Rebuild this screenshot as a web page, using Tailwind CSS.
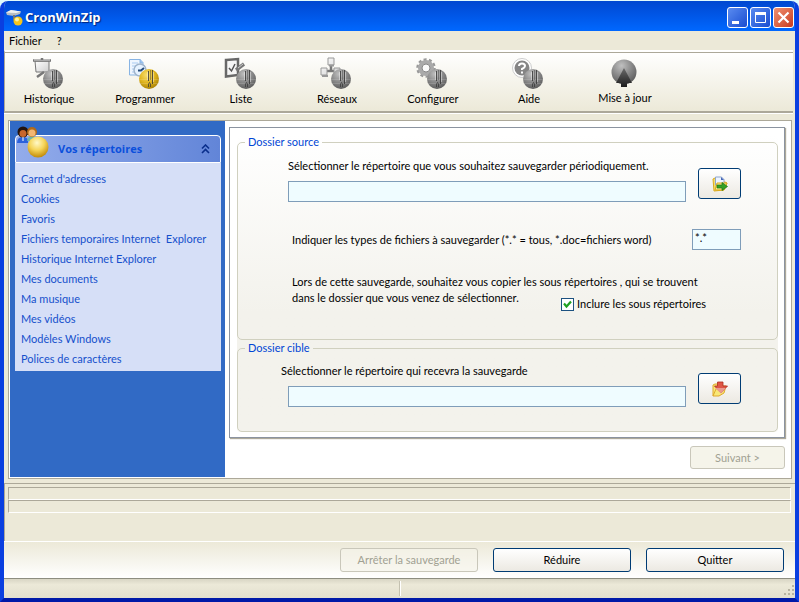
<!DOCTYPE html>
<html lang="fr">
<head>
  <meta charset="UTF-8" />
  <meta name="viewport" content="width=device-width, initial-scale=1.0" />
  <title>CronWinZip</title>
  <script src="https://cdn.jsdelivr.net/npm/@tailwindcss/browser@4"></script>
</head>
<body class="min-h-screen bg-[#e2fbfc] pt-px font-['Lato','Liberation_Sans',sans-serif] text-[11px] leading-4 text-black">
  <!-- shared gradients and the zipped ball -->
  <svg class="absolute size-0" aria-hidden="true">
    <defs>
      <radialGradient id="gray" cx="40%" cy="25%" r="80%"><stop offset="0" stop-color="#c0c0c0" /><stop offset=".5" stop-color="#8a8a8a" /><stop offset="1" stop-color="#585858" /></radialGradient>
      <radialGradient id="gold" cx="40%" cy="30%" r="80%"><stop offset="0" stop-color="#f8e070" /><stop offset=".5" stop-color="#deb31c" /><stop offset="1" stop-color="#9a7400" /></radialGradient>
      <linearGradient id="sheet" x1="0" y1="0" x2="1" y2="1"><stop offset="0" stop-color="#ffffff" /><stop offset="1" stop-color="#cfcfcf" /></linearGradient>
      <linearGradient id="arrow" x1="0" y1="0" x2="0" y2="1"><stop offset="0" stop-color="#6a6a6a" /><stop offset="1" stop-color="#1c1c1c" /></linearGradient>
      <symbol id="zip" viewBox="0 0 20 20">
        <path d="M0 10.500H20M1 14.500H19" stroke="#fff" stroke-opacity=".15" fill="none" />
        <path d="M8.500 3V11M14.500 3V13" stroke="#fff" stroke-opacity=".4" fill="none" />
        <path d="M9.500 2V12M13.500 1V15" stroke="#333" stroke-opacity=".8" fill="none" />
        <path d="M11.500 1V11" stroke="#333" stroke-opacity=".4" fill="none" />
        <path d="M9.500 18V15L10.500 13.500L11.500 15V18" stroke="#333" stroke-opacity=".7" fill="none" />
      </symbol>
    </defs>
  </svg>

  <div class="flex min-h-[calc(100vh-1px)] flex-col overflow-hidden rounded-t-lg border-x-4 border-b-4 border-[#0a3fe0] border-b-[#0019a8] bg-[#ece9d8]">
    <!-- barre de titre -->
    <header class="-mx-1 flex h-[30px] items-center bg-linear-to-b from-[#0048d0] via-[#0057e8] to-[#0068ff] pt-[2px] pr-[5px] pl-[5px]">
      <svg class="size-[18px]" viewBox="0 0 18 18" aria-hidden="true">
        <path d="M1 4.500L6 2L16 3.500L15 6L9 8L2 7Z" fill="#b9bec2" /><path d="M1 4.500L6 2L16 3.500L11 5Z" fill="#f2f2f2" />
        <path d="M9 7V11L12 12" stroke="#777" stroke-width="2" fill="none" />
        <circle cx="13" cy="13" r="4.500" fill="#f4c51c" /><circle cx="12" cy="11.500" r="2" fill="#fff3a0" />
      </svg>
      <h1 class="ml-[2px] flex-1 font-['Open_Sans',sans-serif] text-[13px] font-bold text-white [text-shadow:1px_1px_1px_#00237a]">CronWinZip</h1>
      <div class="flex gap-[2px]">
        <button class="grid size-[21px] place-items-center rounded-[3px] border border-white bg-linear-to-br from-[#5a8bf0] to-[#1a4bd0]" aria-label="Réduire la fenêtre">
          <svg class="size-[19px]" viewBox="0 0 19 19"><path d="M4 13H11V16H4Z" fill="#fff" /></svg>
        </button>
        <button class="grid size-[21px] place-items-center rounded-[3px] border border-white bg-linear-to-br from-[#5a8bf0] to-[#1a4bd0]" aria-label="Agrandir">
          <svg class="size-[19px]" viewBox="0 0 19 19"><path d="M4.500 5V14.500H14.500V5" stroke="#fff" fill="none" /><path d="M4 4H15V7H4Z" fill="#fff" /></svg>
        </button>
        <button class="grid size-[21px] place-items-center rounded-[3px] border border-white bg-linear-to-br from-[#f09070] to-[#c8381c]" aria-label="Fermer">
          <svg class="size-[19px]" viewBox="0 0 19 19"><path d="M4.500 4.500L14.500 14.500M14.500 4.500L4.500 14.500" stroke="#fff" stroke-width="2.200" /></svg>
        </button>
      </div>
    </header>

    <!-- menu -->
    <nav class="flex h-[19px] items-center gap-[15px] pl-[5px]">
      <button>Fichier</button>
      <button>?</button>
    </nav>

    <!-- barre d'outils -->
    <div class="mr-[2px] flex h-[63px] gap-2 border-y-2 border-l border-t-white border-b-[#aca899] border-l-[#aca899] bg-linear-to-b from-white to-[#ece9d8] pt-[5px] shadow-[inset_0_1px_#aca899,0_1px_#fff]">
      <button class="flex w-[88px] flex-col items-center">
        <svg class="size-[34px]" viewBox="0 0 34 34">
          <path d="M3 4H17V15H4Z" fill="url(#sheet)" stroke="#777" /><path d="M1 3.500H19" stroke="#777" stroke-width="2.500" /><path d="M2 3H18" stroke="#ddd" /><path d="M10 1V3M12 15L5 20" stroke="#777" stroke-width="2.500" />
          <circle cx="21" cy="22" r="10" fill="url(#gray)" /><use href="#zip" x="11" y="12" width="20" height="20" />
        </svg>
        <span>Historique</span>
      </button>
      <button class="flex w-[88px] flex-col items-center">
        <svg class="size-[34px]" viewBox="0 0 34 34">
          <path d="M1.500 2.500H12L15 5.500V18H1.500Z" fill="#eef5fe" stroke="#88b4e4" /><path d="M12 2V6H15" fill="#9ac2f0" stroke="#88b4e4" /><path d="M4 6H10M4 9H8M4 12H7M4 15H8" stroke="#a9cbf1" />
          <circle cx="12" cy="13" r="6" fill="#e6f2ff" stroke="#9fb4cc" stroke-width="1.500" /><path d="M10 13.500H13L16 11" stroke="#244a78" stroke-width="2" fill="none" />
          <circle cx="21" cy="22" r="10" fill="url(#gold)" /><use href="#zip" x="11" y="12" width="20" height="20" />
        </svg>
        <span>Programmer</span>
      </button>
      <button class="flex w-[88px] flex-col items-center">
        <svg class="size-[34px]" viewBox="0 0 34 34">
          <path d="M2 3L14 2V18L2 19.500Z" fill="#f5f5f5" stroke="#686868" stroke-width="2.500" /><path d="M5 11L7.500 14L11 7" stroke="#555" stroke-width="1.500" fill="none" />
          <path d="M20 7L12 13" stroke="#777" stroke-width="3.500" /><path d="M19 7L14 11" stroke="#ccc" />
          <circle cx="22" cy="22" r="10" fill="url(#gray)" /><use href="#zip" x="12" y="12" width="20" height="20" />
        </svg>
        <span>Liste</span>
      </button>
      <button class="flex w-[88px] flex-col items-center">
        <svg class="size-[34px]" viewBox="0 0 34 34">
          <path d="M11 7V14M6 14H17" stroke="#777" stroke-width="2.500" />
          <path d="M8 1H14V8H8ZM1 11H7V18H1ZM14 11H20V16H14Z" fill="url(#sheet)" stroke="#999" /><path d="M9 8.500H14M2 19H8" stroke="#999" stroke-width="2" />
          <circle cx="21" cy="22" r="10" fill="url(#gray)" /><use href="#zip" x="11" y="12" width="20" height="20" />
        </svg>
        <span>Réseaux</span>
      </button>
      <button class="flex w-[88px] flex-col items-center">
        <svg class="size-[34px]" viewBox="0 0 34 34">
          <circle cx="10" cy="11" r="8.500" fill="none" stroke="#999" stroke-width="2.500" stroke-dasharray="3 2.340" /><circle cx="10" cy="11" r="6" fill="none" stroke="#aaa" stroke-width="4" /><circle cx="10" cy="11" r="4" fill="#fafafa" stroke="#888" />
          <circle cx="21" cy="22" r="10" fill="url(#gray)" /><use href="#zip" x="11" y="12" width="20" height="20" />
        </svg>
        <span>Configurer</span>
      </button>
      <button class="flex w-[88px] flex-col items-center">
        <svg class="size-[34px]" viewBox="0 0 34 34">
          <circle cx="10" cy="11" r="9.500" fill="#fff" stroke="#ccc" /><circle cx="10" cy="11" r="7.500" fill="#858585" />
          <path d="M7 9Q7 6.500 10 6.500T13 9Q13 10.500 10 12V13M10 14.500V16.500" stroke="#fff" stroke-width="2" fill="none" />
          <circle cx="21" cy="22" r="10" fill="url(#gray)" /><use href="#zip" x="11" y="12" width="20" height="20" />
        </svg>
        <span>Aide</span>
      </button>
      <button class="flex w-[88px] flex-col items-center">
        <svg class="h-[33px] w-[34px]" viewBox="0 0 34 33">
          <circle cx="16" cy="15" r="12.500" fill="url(#gray)" /><path d="M16 11L24 26H19V30H13V26H8Z" fill="url(#arrow)" />
        </svg>
        <span>Mise à jour</span>
      </button>
    </div>

    <!-- zone principale -->
    <main class="mx-1 mt-[7px] mr-[3px] flex border border-[#aca899] bg-white pb-px pl-px">
      <aside class="w-[215px] shrink-0 bg-[#316ac5] pt-[14px] pr-1 pl-[5px]">
        <div class="relative flex h-7 items-center justify-between rounded-t-sm border border-white bg-linear-to-r from-[#93aceb] to-[#6285d8] pr-[10px] pl-[42px]">
          <svg class="absolute -top-[10px] left-px h-9 w-8" viewBox="0 0 32 36" aria-hidden="true">
            <defs><radialGradient id="sun" cx="45%" cy="30%" r="70%"><stop offset="0" stop-color="#fff9c8" /><stop offset=".5" stop-color="#f5d55a" /><stop offset="1" stop-color="#c28a08" /></radialGradient></defs>
            <path d="M0 17Q0 11 6 11T11 17Z" fill="#2b62dc" /><path d="M10 15Q11 10 15 10T20 15Z" fill="#6fb5a5" />
            <circle cx="6" cy="6" r="5.500" fill="#23130c" /><circle cx="6" cy="7.500" r="3.500" fill="#c8662c" />
            <circle cx="15" cy="6" r="5" fill="#b06a18" /><circle cx="15" cy="7" r="3.500" fill="#f3b672" /><path d="M6 11V15" stroke="#fff" />
            <circle cx="21" cy="21" r="10.500" fill="url(#sun)" />
          </svg>
          <h2 class="font-['Open_Sans',sans-serif] font-bold text-[#0b4fdc]">Vos répertoires</h2>
          <button aria-label="Replier">
            <svg class="h-[10px] w-[9px]" viewBox="0 0 9 10"><path d="M1 4.500L4.500 1L8 4.500M1 9L4.500 5.500L8 9" stroke="#0a2f8c" stroke-width="1.600" fill="none" /></svg>
          </button>
        </div>
        <ul class="bg-[#d6dff7] px-[6px] pt-[6px] pb-[2px] leading-5 text-[#1550cc]">
          <li><a href="#">Carnet d'adresses</a></li>
          <li><a href="#">Cookies</a></li>
          <li><a href="#">Favoris</a></li>
          <li><a href="#">Fichiers temporaires Internet&nbsp; Explorer</a></li>
          <li><a href="#">Historique Internet Explorer</a></li>
          <li><a href="#">Mes documents</a></li>
          <li><a href="#">Ma musique</a></li>
          <li><a href="#">Mes vidéos</a></li>
          <li><a href="#">Modèles Windows</a></li>
          <li><a href="#">Polices de caractères</a></li>
        </ul>
      </aside>

      <div class="flex min-w-0 flex-1 flex-col pt-[6px] pr-[6px] pb-2 pl-1">
        <div class="border border-[#8b93a0] pt-[6px] pr-[6px] pb-[5px] pl-[7px] shadow-[1px_1px_1px_#aca899]">
          <div class="rounded-sm bg-linear-to-b from-white to-[#f3f2ec] to-60%">
            <fieldset class="rounded-[5px] border border-[#d0d0bf] pr-9 pb-[27px] pl-[50px]">
              <legend class="-ml-[43px] px-[3px] text-[#0046d5]">Dossier source</legend>
              <div class="flex items-end gap-3 pt-2">
                <div class="flex flex-1 flex-col gap-[7px]">
                  <label for="source">Sélectionner le répertoire que vous souhaitez sauvegarder périodiquement.</label>
                  <input id="source" type="text" class="h-[21px] w-full border border-[#7f9db9] bg-[#effcff] px-1" />
                </div>
                <button class="mb-[3px] grid h-[31px] w-[43px] place-items-center rounded-[3px] border border-[#003c74] bg-linear-to-b from-white to-[#ece9e2]" aria-label="Choisir le dossier source">
                  <svg class="size-4" viewBox="0 0 16 16"><path d="M1 3L3 2H6V6H13L15 7L12 14L2 15Z" fill="#f6df70" stroke="#d9a91c" /><path d="M3.500 1H9.500L12 3.500V9H3.500Z" fill="#edf4ff" stroke="#8da5cc" /><path d="M9 1L12 4H9Z" fill="#4968b8" /><path d="M3 14L5 7H15L12 14Z" fill="#f9e98c" stroke="#d9a91c" /><path d="M5 9H10V6.500L15.500 10.500L10 14.500V12H5Z" fill="#35a025" stroke="#1c7515" stroke-width=".7" /></svg>
                </button>
              </div>
              <div class="mt-[27px] flex items-center justify-between pl-1">
                <label for="types">Indiquer les types de fichiers à sauvegarder (*.* = tous, *.doc=fichiers word)</label>
                <input id="types" type="text" value="*.*" class="h-[21px] w-[49px] border border-[#7f9db9] bg-[#effcff] px-[2px] pb-1" />
              </div>
              <div class="mt-6 pl-1">
                <p>Lors de cette sauvegarde, souhaitez vous copier les sous répertoires , qui se trouvent</p>
                <div class="flex items-start justify-between pr-[35px]">
                  <p>dans le dossier que vous venez de sélectionner.</p>
                  <label for="sub" class="flex items-center gap-[3px] pt-[6px]">
                    <span class="relative grid size-[13px] place-items-center">
                      <input id="sub" type="checkbox" checked class="peer size-[13px] appearance-none border border-[#1c5180] bg-white" />
                      <svg class="pointer-events-none absolute size-[9px] opacity-0 peer-checked:opacity-100" viewBox="0 0 9 9"><path d="M1 3.500L3.500 6.500L8 1.500" stroke="#21a121" stroke-width="2.200" fill="none" /></svg>
                    </span>
                    Inclure les sous répertoires
                  </label>
                </div>
              </div>
            </fieldset>
            <fieldset class="rounded-[5px] border border-[#d0d0bf] pr-9 pb-6 pl-[43px]">
              <legend class="-ml-9 px-[3px] text-[#0046d5]">Dossier cible</legend>
              <div class="flex items-end gap-3 pt-[7px]">
                <div class="flex flex-1 flex-col gap-[7px]">
                  <label for="target">Sélectionner le répertoire qui recevra la sauvegarde</label>
                  <div class="pl-[7px]">
                    <input id="target" type="text" class="block h-[21px] w-full border border-[#7f9db9] bg-[#effcff] px-1" />
                  </div>
                </div>
                <button class="mb-[3px] grid h-[31px] w-[43px] place-items-center rounded-[3px] border border-[#003c74] bg-linear-to-b from-white to-[#ece9e2]" aria-label="Choisir le dossier cible">
                  <svg class="size-4" viewBox="0 0 16 16"><path d="M1 4L3 3H7L8 5H14L12 12L7 15H1Z" fill="#f8e878" stroke="#dfa92c" /><path d="M5.500 1H11V5H15.500L9 12L2.500 5H5.500Z" fill="#df5646" stroke="#ae2f1e" stroke-width=".8" /><path d="M3 7H14L9 12.500Z" fill="#e99a8e" /><path d="M1 15L4 8" stroke="#dfa92c" /></svg>
                </button>
              </div>
            </fieldset>
          </div>
        </div>
        <button disabled class="mt-2 h-[23px] w-[95px] self-end rounded-[3px] border border-[#c9c7ba] bg-[#f5f4ea] text-[#a1a192]">Suivant &gt;</button>
      </div>
    </main>

    <!-- progression -->
    <section class="mt-1 border-t border-l border-[#aca899] pt-[3px] pr-1 pb-7 pl-[3px]">
      <div class="h-[13px] border border-[#aca899] border-r-white border-b-white"></div>
      <div class="h-[13px] border border-[#aca899] border-r-white border-b-white"></div>
    </section>

    <footer class="flex justify-end gap-[15px] border-t border-b border-t-white border-b-[#8d8d80] bg-linear-to-b from-[#ece9d8] to-white pt-[6px] pr-[11px] pb-[6px]">
      <button disabled class="h-6 w-[138px] rounded-[3px] border border-[#c9c7ba] bg-[#f5f4ea]/60 text-[#a1a192]">Arrêter la sauvegarde</button>
      <button class="h-6 w-[138px] rounded-[3px] border border-[#003c74] bg-linear-to-b from-white to-[#ece9e2]">Réduire</button>
      <button class="h-6 w-[138px] rounded-[3px] border border-[#003c74] bg-linear-to-b from-white to-[#ece9e2]">Quitter</button>
    </footer>

    <!-- barre d'état -->
    <div class="flex min-h-[18px] flex-1 bg-linear-to-b from-[#d8d5c4] via-[#ece9d8] via-30% to-[#e2dfce]">
      <div class="my-[2px] flex-1 border-r border-[#c4c1b0]"></div>
      <div class="my-[2px] flex flex-1 items-end justify-end border-l border-white">
        <svg class="size-3" viewBox="0 0 12 12" aria-hidden="true"><path d="M9 1H11V3H9ZM9 5H11V7H9ZM9 9H11V11H9ZM5 5H7V7H5ZM5 9H7V11H5ZM1 9H3V11H1Z" fill="#b8b4a2" /></svg>
      </div>
    </div>
  </div>
</body>
</html>
